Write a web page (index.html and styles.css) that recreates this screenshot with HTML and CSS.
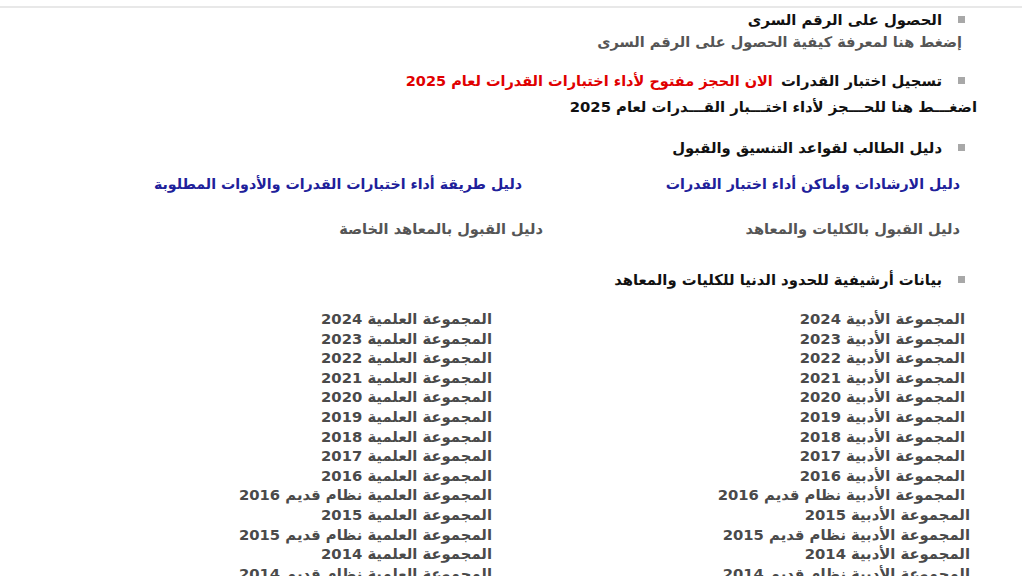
FILE: index.html
```html
<!DOCTYPE html>
<html lang="ar" dir="rtl">
<head>
<meta charset="utf-8">
<title>القدرات</title>
<link rel="stylesheet" href="styles.css">
</head>
<body>
<div class="topline"></div>
<main class="page">
  <section class="block b1">
    <h2 class="item">الحصول على الرقم السرى</h2>
    <p class="sub sub1">إضغط هنا لمعرفة كيفية الحصول على الرقم السرى</p>
  </section>

  <section class="block b2">
    <h2 class="item">تسجيل اختبار القدرات <span class="red">الان الحجز مفتوح لأداء اختبارات القدرات لعام 2025</span></h2>
    <p class="sub sub2">اضغـــط هنا للحـــجز لأداء اختـــبار القـــدرات لعام 2025</p>
  </section>

  <section class="block b3">
    <h2 class="item">دليل الطالب لقواعد التنسيق والقبول</h2>
    <div class="row links">
      <a class="cell c1">دليل الارشادات وأماكن أداء اختبار القدرات</a>
      <a class="cell">دليل طريقة أداء اختبارات القدرات والأدوات المطلوبة</a>
    </div>
    <div class="row guides">
      <span class="cell c1">دليل القبول بالكليات والمعاهد</span>
      <span class="cell">دليل القبول بالمعاهد الخاصة</span>
    </div>
  </section>

  <section class="block b4">
    <h2 class="item">بيانات أرشيفية للحدود الدنيا للكليات والمعاهد</h2>
    <div class="lists">
      <ul class="col c1">
        <li>المجموعة الأدبية 2024</li>
        <li>المجموعة الأدبية 2023</li>
        <li>المجموعة الأدبية 2022</li>
        <li>المجموعة الأدبية 2021</li>
        <li>المجموعة الأدبية 2020</li>
        <li>المجموعة الأدبية 2019</li>
        <li>المجموعة الأدبية 2018</li>
        <li>المجموعة الأدبية 2017</li>
        <li>المجموعة الأدبية 2016</li>
        <li>المجموعة الأدبية نظام قديم 2016</li>
        <li class="out">المجموعة الأدبية 2015</li>
        <li class="out">المجموعة الأدبية نظام قديم 2015</li>
        <li class="out">المجموعة الأدبية 2014</li>
        <li class="out">المجموعة الأدبية نظام قديم 2014</li>
      </ul>
      <ul class="col">
        <li>المجموعة العلمية 2024</li>
        <li>المجموعة العلمية 2023</li>
        <li>المجموعة العلمية 2022</li>
        <li>المجموعة العلمية 2021</li>
        <li>المجموعة العلمية 2020</li>
        <li>المجموعة العلمية 2019</li>
        <li>المجموعة العلمية 2018</li>
        <li>المجموعة العلمية 2017</li>
        <li>المجموعة العلمية 2016</li>
        <li>المجموعة العلمية نظام قديم 2016</li>
        <li>المجموعة العلمية 2015</li>
        <li>المجموعة العلمية نظام قديم 2015</li>
        <li>المجموعة العلمية 2014</li>
        <li>المجموعة العلمية نظام قديم 2014</li>
      </ul>
    </div>
  </section>
</main>
</body>
</html>
```

FILE: styles.css
```css
html, body {
  margin: 0;
  padding: 0;
  background: #fff;
}
body {
  font-family: "DejaVu Sans", "Noto Sans", sans-serif;
  font-size: 14.8px;
  font-weight: bold;
  color: #000;
  overflow: hidden;
  height: 576px;
}
.topline {
  margin-top: 6px;
  height: 2px;
  background: #e8e8e8;
}
.page {
  padding-right: 57px;
}
.block {
  margin: 0;
}
.item {
  position: relative;
  margin: 0;
  padding-right: 23px;
  font-size: 14.8px;
  line-height: 22px;
  font-weight: bold;
  color: #111;
}
.item::before {
  content: "";
  position: absolute;
  right: 0;
  top: 7px;
  width: 7px;
  height: 7px;
  background: #a8a8a8;
}
.sub {
  margin: 0;
  line-height: 22px;
}
.b1 { padding-top: 1px; }
.sub1 {
  color: #555;
  padding-right: 3px;
  font-size: 14.5px;
}
.b2 { margin-top: 17px; }
.red {
  color: #e00000;
  margin-right: 3px;
  font-size: 14.5px;
}
.sub2 {
  margin-top: 4px;
  margin-right: -12px;
  color: #111;
}
.b3 { margin-top: 19px; }
.row {
  display: flex;
  line-height: 22px;
  padding-right: 5px;
}
.links {
  margin-top: 14px;
  color: #20209a;
  font-size: 14.2px;
}
.links .c1 { width: 438px; }
.guides {
  margin-top: 23px;
  color: #555;
  font-size: 14.6px;
}
.guides .c1 { width: 417px; }
.b4 { margin-top: 29px; }
.lists {
  display: flex;
  margin-top: 18px;
}
.col {
  list-style: none;
  margin: 0;
  padding: 0;
  color: #4a4a4a;
}
.col li {
  line-height: 19.6px;
  white-space: nowrap;
}
.col.c1 { width: 473px; }
.col li.out { margin-right: -5px; }
```
